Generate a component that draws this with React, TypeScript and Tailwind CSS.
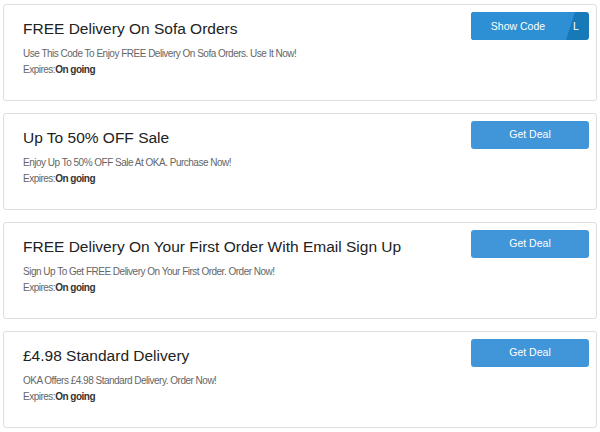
const deals = [
  {
    title: "FREE Delivery On Sofa Orders",
    desc: "Use This Code To Enjoy FREE Delivery On Sofa Orders. Use It Now!",
    code: true,
  },
  {
    title: "Up To 50% OFF Sale",
    desc: "Enjoy Up To 50% OFF Sale At OKA. Purchase Now!",
    code: false,
  },
  {
    title: "FREE Delivery On Your First Order With Email Sign Up",
    desc: "Sign Up To Get FREE Delivery On Your First Order. Order Now!",
    code: false,
  },
  {
    title: "£4.98 Standard Delivery",
    desc: "OKA Offers £4.98 Standard Delivery. Order Now!",
    code: false,
  },
];

function ShowCodeButton() {
  return (
    <button className="flex h-[28px] w-[118px] overflow-hidden rounded-[3px] bg-[#1879b9] text-[10.5px] leading-[28px] text-white">
      <span className="block h-full w-[104px] bg-[#2e90d4] pr-[10px] text-center [clip-path:polygon(0_0,100%_0,calc(100%-9px)_100%,0_100%)]">
        Show Code
      </span>
      {/* tail of the code peeking out under the corner */}
      <span className="ml-[-2px] block">L</span>
    </button>
  );
}

function DealButton() {
  return (
    <button className="h-[28px] w-[118px] rounded-[3px] bg-[#4196d9] text-[10.5px] text-white">
      Get Deal
    </button>
  );
}

export default function App() {
  return (
    <div className="flex h-[432px] w-[600px] flex-col gap-[12px] bg-white px-[3px] pt-[4px] font-['Liberation_Sans',Arial,sans-serif]">
      {deals.map((d, i) => (
        <div
          key={i}
          className="flex h-[97px] justify-between rounded-[3px] border border-[#dedede] bg-white pl-[19px] pr-[7px] pt-[7px]"
        >
          <div className="pt-[8px]">
            <h3 className="text-[15.5px] leading-[18px] text-[#222]">{d.title}</h3>
            <p className="mt-[8px] text-[10px] leading-[16px] tracking-[-0.5px] text-[#666]">
              {d.desc}
            </p>
            <p className="text-[10px] leading-[16px] tracking-[-0.5px] text-[#666]">
              Expires:<span className="font-bold text-[#333]">On going</span>
            </p>
          </div>
          <div>{d.code ? <ShowCodeButton /> : <DealButton />}</div>
        </div>
      ))}
    </div>
  );
}
